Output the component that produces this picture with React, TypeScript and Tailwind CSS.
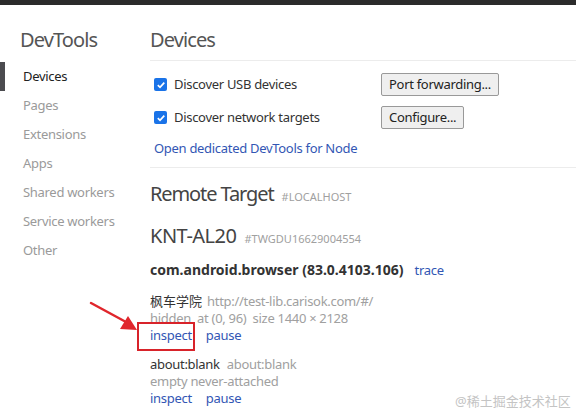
import React from "react";

const font = { fontFamily: '"Noto Sans", "Noto Sans CJK SC", sans-serif' };

const navItems = ["Devices", "Pages", "Extensions", "Apps", "Shared workers", "Service workers", "Other"];

const Check = () => (
  <span className="w-[13px] h-[13px] rounded-[2px] bg-[#1a73e8] flex items-center justify-center shrink-0">
    <svg width="10" height="10" viewBox="0 0 10 10">
      <path d="M1.8 5.2 L4 7.3 L8.3 2.6" stroke="white" strokeWidth="1.7" fill="none" />
    </svg>
  </span>
);

const Btn = ({ children }: { children: React.ReactNode }) => (
  <button className="h-[23px] px-[7px] border border-[#999] rounded-[2px] bg-[#efefef] text-[13px] text-[#222] leading-none tracking-[-0.3px]">
    {children}
  </button>
);

const Actions = () => (
  <div className="flex gap-[14px] text-[#3256b4] h-[17px] leading-[17px]">
    <span>inspect</span>
    <span>pause</span>
  </div>
);

export default function App() {
  return (
    <div style={font} className="w-[576px] h-[419px] bg-white overflow-hidden relative text-[13px] text-[#333] tracking-[-0.3px]">
      <div className="h-[5px] bg-[#2b2b2b]" />
      <div className="flex">
        {/* sidebar */}
        <div className="w-[150px] shrink-0">
          <div className="h-[56px] pt-[21px] pl-[20px] text-[20px] leading-[28px] text-[#555] tracking-[-0.9px]">DevTools</div>
          <ul className="pt-[1px]">
            {navItems.map((item, i) =>
              i === 0 ? (
                <li key={item} className="h-[29px] flex items-center pl-[18px] border-l-[5px] border-[#4b4b4f] text-[#222]">
                  {item}
                </li>
              ) : (
                <li key={item} className="h-[29px] flex items-center pl-[23px] text-[#9a9a9a]">
                  {item}
                </li>
              )
            )}
          </ul>
        </div>

        {/* main */}
        <div className="flex-1">
          <div className="h-[56px] pt-[21px] text-[20px] leading-[28px] text-[#555] tracking-[-0.9px] border-b border-[#ececec]">
            Devices
          </div>
          <div className="pl-[4px] border-b border-[#ececec] pb-[9px]">
            <div className="flex items-center h-[33px] mt-[7px]">
              <div className="w-[227px] flex items-center gap-[7px]">
                <Check />
                <span>Discover USB devices</span>
              </div>
              <Btn>Port forwarding...</Btn>
            </div>
            <div className="flex items-center h-[33px]">
              <div className="w-[227px] flex items-center gap-[7px]">
                <Check />
                <span>Discover network targets</span>
              </div>
              <Btn>Configure...</Btn>
            </div>
            <div className="h-[20px] leading-[20px] mt-[4px] text-[#3256b4]">Open dedicated DevTools for Node</div>
          </div>

          <div className="mt-[11px] flex items-baseline gap-[8px] h-[26px]">
            <span className="text-[20px] text-[#444] tracking-[-1.1px]">Remote Target</span>
            <span className="text-[11px] text-[#a0a0a0] tracking-normal">#LOCALHOST</span>
          </div>
          <div className="mt-[16px] flex items-baseline gap-[8px] h-[26px]">
            <span className="text-[20px] text-[#444] tracking-[-0.5px]">KNT-AL20</span>
            <span className="text-[11px] text-[#a0a0a0] tracking-normal">#TWGDU16629004554</span>
          </div>
          <div className="mt-[12px] flex items-baseline gap-[11px] h-[20px]">
            <span className="font-bold text-[14px] tracking-normal text-[#333]">com.android.browser (83.0.4103.106)</span>
            <span className="text-[#3256b4]">trace</span>
          </div>

          <div className="mt-[14px] leading-[17px]">
            <div className="flex gap-[5px] h-[17px]">
              <span className="text-[#333] tracking-normal">枫车学院</span>
              <span className="text-[#a0a0a0]">http://test-lib.carisok.com/#/</span>
            </div>
            <div className="text-[#a0a0a0] h-[17px] whitespace-pre">hidden  at (0, 96)  size 1440 × 2128</div>
            <Actions />
          </div>

          <div className="mt-[12px] leading-[17px]">
            <div className="flex gap-[7px] h-[17px]">
              <span className="text-[#333]">about:blank</span>
              <span className="text-[#a0a0a0]">about:blank</span>
            </div>
            <div className="text-[#a0a0a0] h-[17px]">empty never-attached</div>
            <Actions />
          </div>
        </div>
      </div>

      {/* annotation */}
      <div className="absolute left-[137px] top-[322px] w-[58px] h-[29px] border-2 border-[#d8232a]" />
      <svg className="absolute left-0 top-0" width="576" height="419" viewBox="0 0 576 419">
        <path d="M91 303 L126 322" stroke="#e0262c" strokeWidth="2.5" strokeLinecap="round" />
        <path d="M137 330 L120 329 L128 316 Z" fill="#e0262c" />
      </svg>
      <div className="absolute left-[455px] top-[392px] text-[13px] text-[#c4c4c4] tracking-normal">@稀土掘金技术社区</div>
    </div>
  );
}
